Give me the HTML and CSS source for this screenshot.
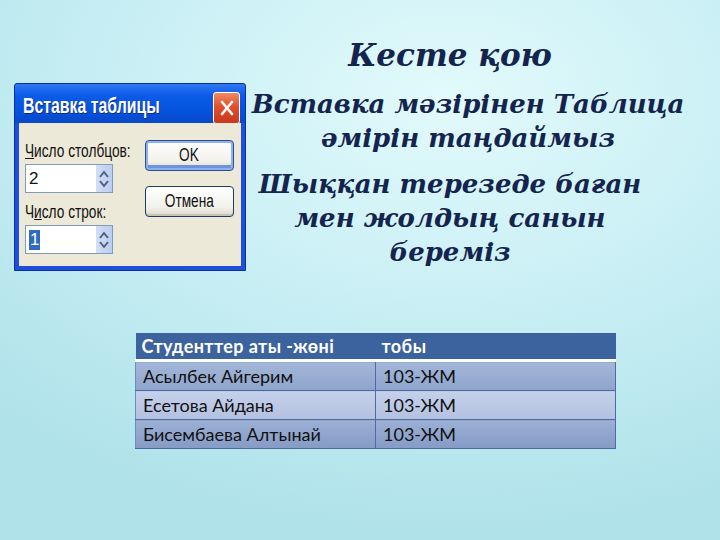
FILE: index.html
```html
<!DOCTYPE html>
<html lang="kk">
<head>
<meta charset="utf-8">
<title>Кесте қою</title>
<link rel="stylesheet" href="styles.css">
</head>
<body>
<div class="slide">
  <div class="top">
    <div class="dialog">
      <div class="titlebar">
        <span class="dlg-title">Вставка таблицы</span>
        <span class="close">
          <svg width="14" height="16" viewBox="0 0 14 16"><path d="M2 2 L12 14 M12 2 L2 14" stroke="#fff" stroke-width="2.6" stroke-linecap="round"/></svg>
        </span>
      </div>
      <div class="dlg-body">
        <div class="fields">
          <div class="label"><u>Ч</u>исло столбцов:</div>
          <div class="spin">
            <span class="val">2</span>
            <span class="arrows">
              <svg width="10" height="20" viewBox="0 0 10 20"><path d="M1 8 L5 3 L9 8" fill="none" stroke="#4d6185" stroke-width="2"/><path d="M1 12 L5 17 L9 12" fill="none" stroke="#4d6185" stroke-width="2"/></svg>
            </span>
          </div>
          <div class="label l2">Ч<u>и</u>сло строк:</div>
          <div class="spin">
            <span class="val sel">1</span>
            <span class="arrows">
              <svg width="10" height="20" viewBox="0 0 10 20"><path d="M1 8 L5 3 L9 8" fill="none" stroke="#4d6185" stroke-width="2"/><path d="M1 12 L5 17 L9 12" fill="none" stroke="#4d6185" stroke-width="2"/></svg>
            </span>
          </div>
        </div>
        <div class="buttons">
          <div class="btn ok"><span class="btxt">OK</span></div>
          <div class="btn"><span class="btxt">Отмена</span></div>
        </div>
      </div>
    </div>
    <div class="text">
      <h1 class="title">Кесте қою</h1>
      <p class="para p1">Вставка мәзірінен Таблица<br>әмірін таңдаймыз</p>
      <p class="para p2">Шыққан терезеде баған<br>мен жолдың санын<br>береміз</p>
    </div>
  </div>
  <table class="students">
    <thead>
      <tr><th class="c1">Студенттер аты -жөні</th><th>тобы</th></tr>
    </thead>
    <tbody>
      <tr class="r1"><td class="c1">Асылбек Айгерим</td><td>103-ЖМ</td></tr>
      <tr class="r2"><td class="c1">Есетова Айдана</td><td>103-ЖМ</td></tr>
      <tr class="r3"><td class="c1">Бисембаева Алтынай</td><td>103-ЖМ</td></tr>
    </tbody>
  </table>
</div>
</body>
</html>
```

FILE: styles.css
```css
html, body {
  margin: 0;
  padding: 0;
}
body {
  width: 720px;
  height: 540px;
  overflow: hidden;
}
.slide {
  width: 720px;
  height: 540px;
  box-sizing: border-box;
  background: radial-gradient(ellipse 90% 80% at 62% 18%, #e2fafb 0%, #cbf0f5 45%, #b0e2ea 100%);
  padding: 0 0 0 14px;
}
.top {
  display: flex;
  align-items: flex-start;
}
.dialog {
  margin-top: 83px;
  width: 232px;
  height: 188px;
  box-sizing: border-box;
  background: #1f4fd8;
  border: 1px solid #0a2fa8;
  border-radius: 3px 3px 0 0;
  display: flex;
  flex-direction: column;
  overflow: hidden;
}
.titlebar {
  height: 39px;
  flex: none;
  background: linear-gradient(#2f78f0 0%, #0b5be8 30%, #0552dc 70%, #0a48c8 100%);
  display: flex;
  align-items: center;
  justify-content: space-between;
  padding: 0 5px 0 8px;
}
.dlg-title {
  color: #fff;
  font-family: "Liberation Sans", Arial, sans-serif;
  font-size: 22px;
  font-weight: bold;
  white-space: nowrap;
  display: inline-block;
  transform: scaleX(0.72);
  transform-origin: left center;
  text-shadow: 1px 1px 0 #0a2a80;
  margin-top: 4px;
  width: 135px;
}
.close {
  width: 27px;
  height: 32px;
  box-sizing: border-box;
  border: 1px solid #fff;
  border-radius: 3px;
  background: linear-gradient(#f08a66, #e0502c 45%, #c83a1c);
  display: flex;
  align-items: center;
  justify-content: center;
  margin-top: 8px;
}
.dlg-body {
  flex: 1;
  margin: 0 4px 4px 4px;
  background: #ece9d8;
  display: flex;
  padding: 19px 10px 0 6px;
  gap: 18px;
}
.fields {
  display: flex;
  flex-direction: column;
  width: 102px;
  flex: none;
}
.label {
  font-family: "Liberation Sans", Arial, sans-serif;
  font-size: 18px;
  color: #111;
  line-height: 18px;
  white-space: nowrap;
  transform: scaleX(0.76);
  transform-origin: left center;
}
.label.l2 {
  margin-top: 10px;
}
.spin {
  margin-top: 4px;
  width: 88px;
  height: 29px;
  box-sizing: border-box;
  border: 1px solid #7f9db9;
  background: #fff;
  display: flex;
  align-items: center;
  justify-content: space-between;
}
.val {
  font-family: "Liberation Sans", Arial, sans-serif;
  font-size: 17px;
  color: #111;
  margin-left: 3px;
  line-height: 20px;
}
.val.sel {
  background: #316ac5;
  color: #fff;
  padding: 0 1px;
}
.arrows {
  width: 16px;
  height: 27px;
  background: linear-gradient(90deg, #d4def5, #bccdf0);
  display: flex;
  align-items: center;
  justify-content: center;
}
.buttons {
  display: flex;
  flex-direction: column;
  gap: 15px;
  padding-top: 0;
  margin-top: -2px;
}
.btn {
  width: 89px;
  height: 31px;
  box-sizing: border-box;
  border: 1px solid #1c3c6c;
  border-radius: 4px;
  background: linear-gradient(#ffffff, #f2f1ea 70%, #dcd8c8);
  box-shadow: inset 0 -2px 0 #c8c4b0;
  display: flex;
  align-items: center;
  justify-content: center;
}
.btxt {
  font-family: "Liberation Sans", Arial, sans-serif;
  font-size: 18px;
  color: #111;
  display: inline-block;
  transform: scaleX(0.76);
}
.btn.ok {
  border-color: #2b4f8e;
  box-shadow: inset 0 0 0 2px #8db2ef, inset 0 -3px 0 2px #6c93dc;
}
.text {
  margin-left: 4px;
  width: 400px;
  display: flex;
  flex-direction: column;
  align-items: center;
  font-family: "DejaVu Serif", "Liberation Serif", serif;
  font-style: italic;
  font-weight: bold;
  color: #14244e;
}
.title {
  margin: 37px 0 0 0;
  font-size: 31px;
  line-height: 36px;
  font-weight: bold;
}
.para {
  margin: 0;
  font-size: 26px;
  line-height: 34px;
  text-align: center;
}
.p1 {
  margin-top: 14px;
  margin-left: 36px;
  white-space: nowrap;
}
.p2 {
  margin-top: 12px;
}
.students {
  margin: 62px 0 0 121px;
  width: 481px;
  border-collapse: collapse;
  font-family: Lato, "Open Sans", sans-serif;
  font-size: 18px;
}
.students th {
  background: #3c639d;
  color: #fff;
  font-weight: bold;
  text-align: left;
  height: 26px;
  padding: 0 6px;
  border-bottom: 3px solid #fbfdff;
  letter-spacing: 0.4px;
}
.students td {
  height: 28px;
  padding: 0 7px;
  color: #111;
  border: 1px solid #4d6b9e;
  border-top: none;
}
.students .c1 {
  width: 225px;
}
.students td.c1 {
  border-left: 1px solid #6f8cbc;
}
.r1 td {
  background: linear-gradient(#a3b6d8, #8ea5cc);
}
.r2 td {
  background: linear-gradient(#c5d0ea, #b3c1e0);
}
.r3 td {
  background: linear-gradient(#9cb0d5, #859bc5);
}
```
